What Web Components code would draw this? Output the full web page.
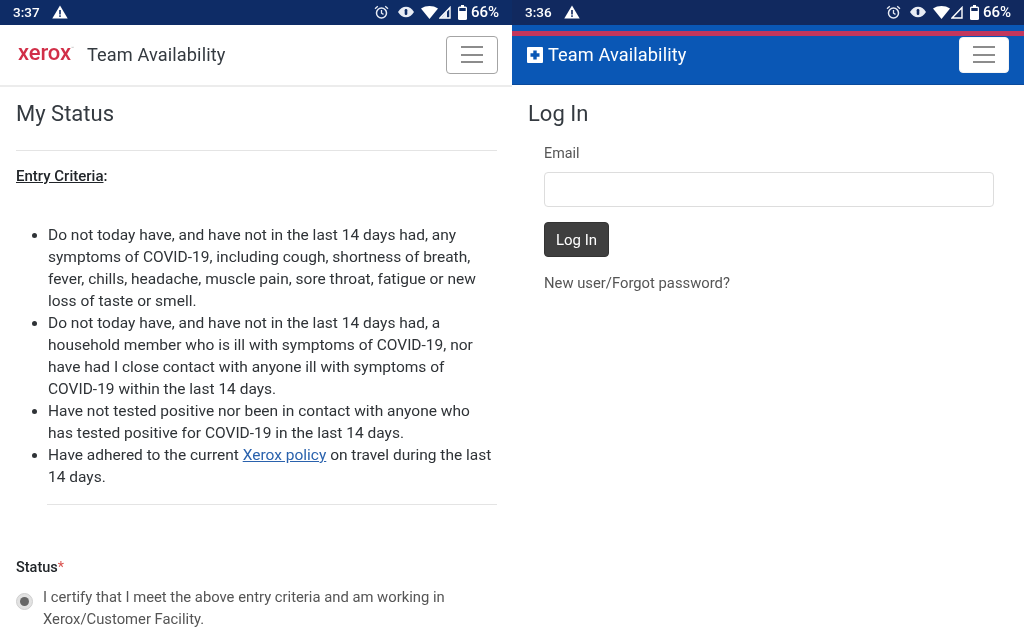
<!DOCTYPE html>
<html><head><meta charset="utf-8"><style>
html,body{margin:0;padding:0;background:#fff;overflow:hidden}
body{font-family:Roboto,sans-serif;color:#212529}
#root{display:flex;width:1024px;height:640px;overflow:hidden;filter:blur(.3px)}
</style></head><body>
<div id="root">
<phone-panel>
  <status-bar time="3:37" color="#0e2c66" slot="status"></status-bar>
  <top-nav slot="nav" variant="light">
    <span style="display:inline-flex;align-items:flex-start;width:59px;margin-left:2px;color:#d12f48;font:500 22px/24px Roboto,sans-serif;letter-spacing:-.1px;position:relative;top:-2px">xerox<span style="font-size:5px;line-height:14px;color:#aaa;font-weight:400">™</span></span>
    <span style="margin-left:10px">Team Availability</span>
  </top-nav>
  <my-status slot="main"></my-status>
</phone-panel>
<phone-panel>
  <status-bar time="3:36" color="#11295f" slot="status"></status-bar>
  <top-nav slot="nav" variant="blue">
    <svg width="16" height="16" viewBox="0 0 16 16" style="flex:none"><rect width="16" height="16" rx="1" fill="#fff"/><path d="M6.300 3.500h3.400v2.800h2.800v3.400H9.700v2.800H6.300V9.700H3.500V6.300h2.800z" fill="#0a57b5"/></svg>
    <span style="margin-left:5px">Team Availability</span>
  </top-nav>
  <log-in slot="main"></log-in>
</phone-panel>
</div>
<script>
function def(name, html){
  customElements.define(name, class extends HTMLElement{
    constructor(){super();this.attachShadow({mode:'open'}).innerHTML=html;}
  });
}
def('phone-panel',`<style>:host{display:flex;flex-direction:column;width:512px;height:640px;overflow:hidden;background:#fff}</style>
<slot name="status"></slot><slot name="nav"></slot><slot name="main"></slot>`);

customElements.define('status-bar',class extends HTMLElement{
  connectedCallback(){
    const t=this.getAttribute('time'),c=this.getAttribute('color');
    this.attachShadow({mode:'open'}).innerHTML=`<style>
    :host{display:flex;align-items:center;height:25px;box-sizing:border-box;padding:0 13px 1px 13px;background:${c};color:#fff;font:500 13.5px Roboto,sans-serif;flex:none}
    .sp{flex:1}
    svg{display:block;flex:none}
    </style>
    <span>${t}</span>
    <svg style="margin-left:12px" width="16" height="14" viewBox="0 0 16 14"><path d="M8 .5 15.700 13.500H.3z" fill="#fff"/><rect x="7.200" y="5" width="1.600" height="4.500" fill="${c}"/><rect x="7.200" y="10.300" width="1.600" height="1.600" fill="${c}"/></svg>
    <span class="sp"></span>
    <svg width="15" height="15" viewBox="0 0 15 15" fill="none" stroke="#e8ecf4" stroke-width="1.500"><circle cx="7.500" cy="8" r="5"/><path d="M7.500 5v3.200l2 1.200M1 3.800 3.800 1.300M14 3.800 11.200 1.300" stroke-width="1.300"/></svg>
    <svg style="margin-left:9px" width="16" height="12" viewBox="0 0 16 12"><path d="M0 6C2 2.500 5 .8 8 .8S14 2.500 16 6C14 9.500 11 11.200 8 11.200S2 9.500 0 6Z" fill="#e8ecf4"/><rect x="6.700" y="3" width="2.600" height="6" rx="1.200" fill="${c}"/></svg>
    <svg style="margin-left:7px" width="17" height="13" viewBox="0 0 17 13"><path d="M0 2.500C5 -.8 12 -.8 17 2.500L8.500 13Z" fill="#fff"/></svg>
    <svg style="margin-left:1px" width="12" height="13" viewBox="0 0 12 13"><path d="M11 1.500V12H1Z" fill="none" stroke="#fff" stroke-width="1.400"/>${t==='3:37'?'<path d="M8 5V12H2Z" fill="#e8ecf4"/>':''}</svg>
    <svg style="margin-left:7px" width="9" height="15" viewBox="0 0 9 15"><rect x="3" y="0" width="3" height="2" fill="#fff"/><rect x="0" y="1.500" width="9" height="13.500" rx="1.500" fill="#fff"/><rect x="1.300" y="3" width="6.400" height="3" fill="${c}"/></svg>
    <span style="margin-left:4px;font-size:15px">66%</span>`;
  }
});

customElements.define('top-nav',class extends HTMLElement{
  connectedCallback(){
    const blue=this.getAttribute('variant')==='blue';
    this.attachShadow({mode:'open'}).innerHTML=`<style>
    :host{display:flex;flex:none;height:${blue?60:62}px;box-sizing:border-box;background:${blue?'#0a57b5':'#fff'};color:${blue?'#fff':'#343a40'};position:relative;
      ${blue?'border-bottom:1px solid #0a4a9c;':'border-bottom:2px solid #ececec;'}}
    .stripe{position:absolute;left:0;right:0;top:6px;height:5px;background:#c2365d}
    .row{flex:1;min-width:0;display:flex;align-items:center;padding:${blue?'0 15px 0 15px':'0 14px 0 16px'};font:400 18.2px Roboto,sans-serif;letter-spacing:.1px}
    .sp{flex:1}
    button{all:unset;box-sizing:border-box;display:flex;flex-direction:column;gap:5.5px;align-items:center;justify-content:center;background:#fff;border:${blue?'1px solid #f4f4f4':'1.5px solid #a4a4a4'};border-radius:4px;width:${blue?'50':'52'}px;height:${blue?'36':'38'}px;position:relative}
    i{display:block;width:22px;height:2px;background:#8c8c8c}
    </style>
    ${blue?'<div class="stripe"></div>':''}
    <div class="row" style="${blue?'':'padding-bottom:1px'}"><slot></slot><span class="sp"></span><button aria-label="menu"><i></i><i></i><i></i></button></div>`;
  }
});

def('my-status',`<style>
:host{display:block;padding:0 15px 0 16px;font:400 15.5px/22px Roboto,sans-serif;color:#2f3337;overflow:hidden;flex:1}
h1{font:400 22px/27px Roboto,sans-serif;margin:13px 0 0;color:#343a40}
hr{border:0;border-top:1px solid #e4e4e4;margin:23px 0 0}
.ec{margin-top:14px;font-weight:500;font-size:15px;color:#212529}
ul{margin:37px 0 0;padding:0 3px 0 32px}
a{color:#2a62ad;text-decoration:underline}
hr.b{margin:16px 0 0 31px}
.st{margin-top:52px;font-weight:500;font-size:14.5px;line-height:22px;color:#212529}
.st b{color:#d9534f;font-weight:400}
.radio{display:flex;margin-top:7px;color:#555;font-size:14.8px;line-height:22px}
.dot{flex:none;width:17px;height:17px;border-radius:50%;background:#e2e2e2;border:1px solid #cfcfcf;box-sizing:border-box;display:flex;align-items:center;justify-content:center;margin:7px 10px 0 0}
.dot::after{content:"";width:9px;height:9px;border-radius:50%;background:#666}
</style>
<h1>My Status</h1>
<hr>
<div class="ec"><u>Entry Criteria</u>:</div>
<ul>
<li>Do not today have, and have not in the last 14 days had, any symptoms of COVID-19, including cough, shortness of breath, fever, chills, headache, muscle pain, sore throat, fatigue or new loss of taste or smell.</li>
<li>Do not today have, and have not in the last 14 days had, a household member who is ill with symptoms of COVID-19, nor have had I close contact with anyone ill with symptoms of COVID-19 within the last 14 days.</li>
<li>Have not tested positive nor been in contact with anyone who has tested positive for COVID-19 in the last 14 days.</li>
<li>Have adhered to the current <a href="#">Xerox policy</a> on travel during the last 14 days.</li>
</ul>
<hr class="b">
<div class="st">Status<b>*</b></div>
<div class="radio"><span class="dot"></span><span>I certify that I meet the above entry criteria and am working in Xerox/Customer Facility.</span></div>`);

def('log-in',`<style>
:host{display:block;padding:0 31px 0 16px;font:400 14.3px/22px Roboto,sans-serif;color:#555;flex:1}
h1{font:400 22px/27px Roboto,sans-serif;margin:15px 0 0;color:#343a40}
.f{padding-left:16px}
label{display:block;margin-top:15px}
input{display:block;box-sizing:border-box;width:450px;height:35px;margin-top:8px;border:1px solid #ddd;border-radius:4px;background:#fff}
button{all:unset;display:flex;align-items:center;justify-content:center;box-sizing:border-box;width:65px;height:35px;margin-top:15px;background:#3f3f3f;border:1px solid #333;border-radius:4px;color:#fff;font:inherit;font-size:15px}
p{margin:15px 0 0;font-size:14.8px}
</style>
<h1>Log In</h1>
<div class="f">
<label>Email</label>
<input aria-label="Email">
<button>Log In</button>
<p>New user/Forgot password?</p>
</div>`);
</script>
</body></html>
